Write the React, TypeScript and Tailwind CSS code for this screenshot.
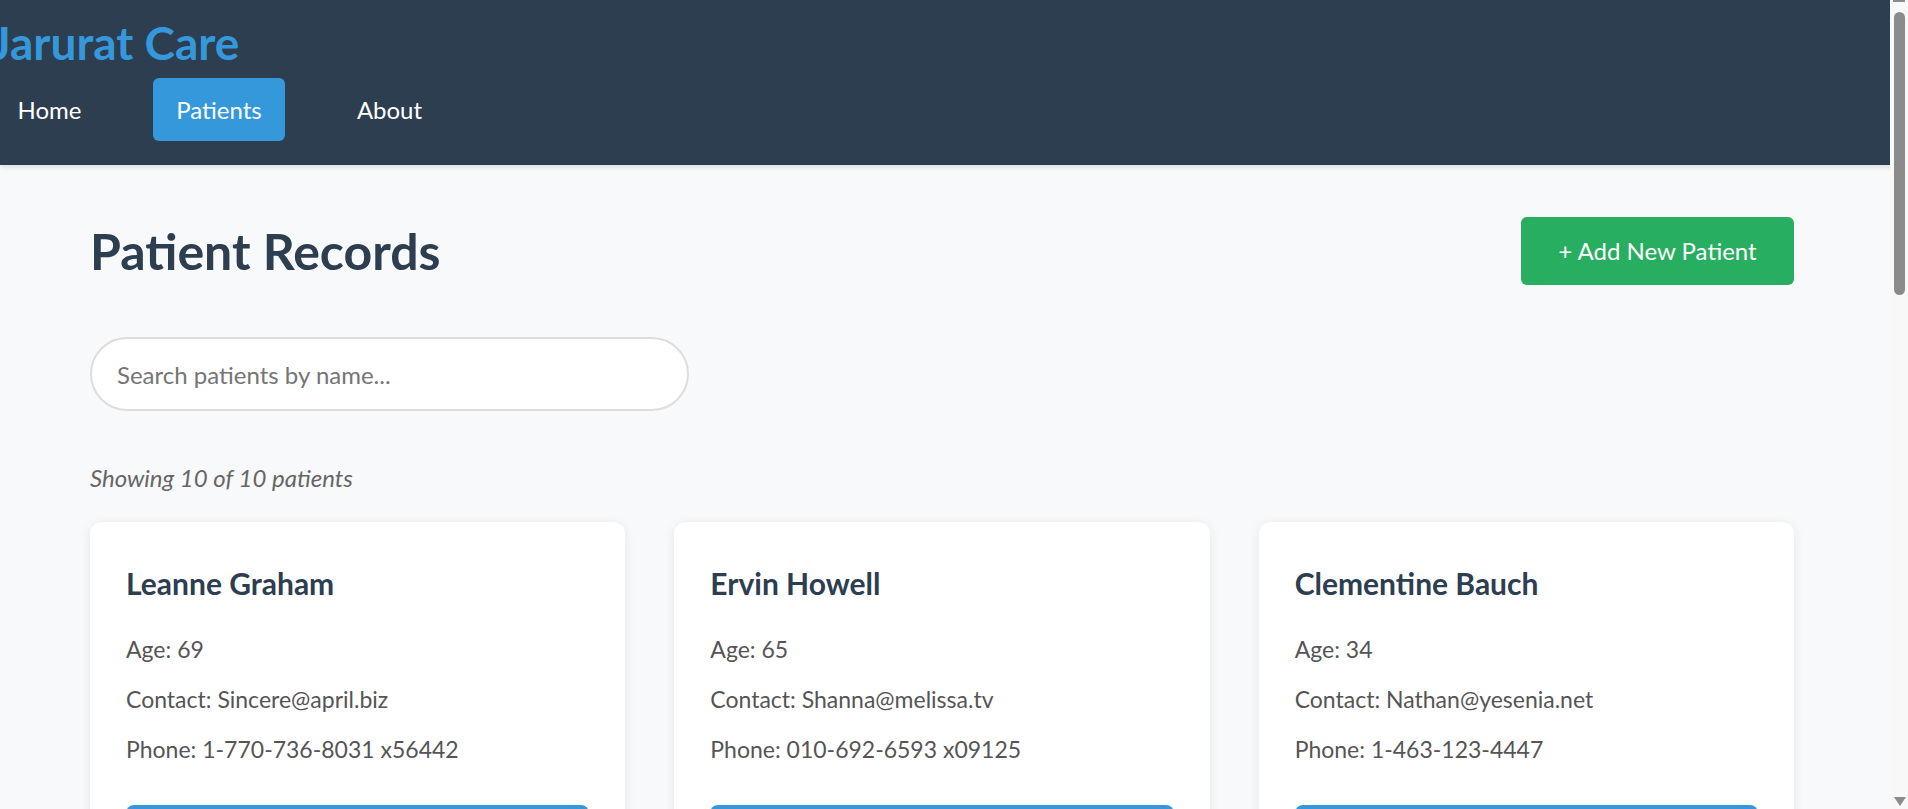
import React from "react";

interface Patient {
  id: number;
  name: string;
  age: number;
  email: string;
  phone: string;
}

const patients: Patient[] = [
  { id: 1, name: "Leanne Graham", age: 69, email: "Sincere@april.biz", phone: "1-770-736-8031 x56442" },
  { id: 2, name: "Ervin Howell", age: 65, email: "Shanna@melissa.tv", phone: "010-692-6593 x09125" },
  { id: 3, name: "Clementine Bauch", age: 34, email: "Nathan@yesenia.net", phone: "1-463-123-4447" },
  { id: 4, name: "Patricia Lebsack", age: 52, email: "Julianne.OConner@kory.org", phone: "493-170-9623 x156" },
  { id: 5, name: "Chelsey Dietrich", age: 41, email: "Lucio_Hettinger@annie.ca", phone: "(254)954-1289" },
  { id: 6, name: "Mrs. Dennis Schulist", age: 58, email: "Karley_Dach@jasper.info", phone: "1-477-935-8478 x6430" },
  { id: 7, name: "Kurtis Weissnat", age: 27, email: "Telly.Hoeger@billy.biz", phone: "210.067.6132" },
  { id: 8, name: "Nicholas Runolfsdottir V", age: 73, email: "Sherwood@rosamond.me", phone: "586.493.6943 x140" },
  { id: 9, name: "Glenna Reichert", age: 46, email: "Chaim_McDermott@dana.io", phone: "(775)976-6794 x41206" },
  { id: 10, name: "Clementina DuBuque", age: 31, email: "Rey.Padberg@karina.biz", phone: "024-648-3804" },
];

// top bar with brand and links
function Header() {
  const links = [
    { label: "Home", w: "w-[113px]", active: false },
    { label: "Patients", w: "w-[132px]", active: true },
    { label: "About", w: "w-[115px]", active: false },
  ];
  return (
    <header className="h-[165px] bg-[#2c3e50] pt-[15px] shadow-[0_2px_6px_rgba(0,0,0,0.12)] relative z-10 overflow-hidden">
      <h1 className="-ml-[9px] text-[46px] leading-[56px] font-bold text-[#3498db] whitespace-nowrap">
        Jarurat Care
      </h1>
      <nav className="mt-[7px] -ml-[7px] flex gap-[47px]">
        {links.map((l) => (
          <a
            key={l.label}
            href="#"
            className={
              l.w +
              " h-[63px] leading-[63px] text-center text-[24px] text-white rounded-[6px] " +
              (l.active ? "bg-[#3498db]" : "")
            }
          >
            {l.label}
          </a>
        ))}
      </nav>
    </header>
  );
}

function PatientCard({ patient }: { patient: Patient }) {
  return (
    <div className="bg-white rounded-[12px] shadow-[0_2px_12px_rgba(0,0,0,0.08)] px-[36px] pt-[42px] pb-[36px]">
      <h3 className="text-[30px] leading-[38px] font-bold text-[#2c3e50]">{patient.name}</h3>
      <div className="mt-[32px] flex flex-col gap-[20px] text-[23px] leading-[30px] text-[#555]">
        <p>Age: {patient.age}</p>
        <p>Contact: {patient.email}</p>
        <p>Phone: {patient.phone}</p>
      </div>
      <button className="mt-[41px] w-full h-[54px] rounded-[8px] bg-[#3498db] text-white text-[24px]">
        View Details
      </button>
    </div>
  );
}

// the browser's scrollbar, drawn since the page shot has none
function FakeScrollbar() {
  return (
    <div className="fixed right-0 top-0 z-50 h-screen w-[18px] bg-[#f8f8f8]">
      <div className="mx-auto h-[2px] w-[12px] bg-[#8b8b8b]" />
      <div className="ml-[4px] mt-[10px] h-[283px] w-[11px] rounded-full bg-[#8b8b8b]" />
      <svg className="absolute bottom-[2px] left-[4px]" width="12" height="10" viewBox="0 0 12 10">
        <polygon points="0,0 12,0 6,9" fill="#8b8b8b" />
      </svg>
    </div>
  );
}

export default function App() {
  return (
    <div className="min-h-screen bg-[#f8f9fa] font-['Lato','Noto_Sans',sans-serif]">
      <Header />

      <main className="ml-[90px] w-[1704px] pt-[52px] pb-[48px]">
        {/* title row */}
        <div className="flex items-center justify-between">
          <h2 className="text-[50px] leading-[62px] font-bold text-[#2c3e50]">Patient Records</h2>
          <button className="w-[273px] h-[68px] rounded-[6px] bg-[#27ae60] text-white text-[24px]">
            + Add New Patient
          </button>
        </div>

        {/* search */}
        <input
          type="text"
          placeholder="Search patients by name..."
          className="mt-[52px] block w-[599px] h-[74px] rounded-full border-2 border-[#ddd] bg-white pl-[25px] text-[24px] text-[#333] placeholder:text-[#757575] outline-none"
        />

        <p className="mt-[52px] text-[24px] leading-[30px] italic text-[#666]">
          Showing {patients.length} of {patients.length} patients
        </p>

        <div className="mt-[29px] grid grid-cols-3 gap-[49px]">
          {patients.map((p) => (
            <PatientCard key={p.id} patient={p} />
          ))}
        </div>
      </main>

      <FakeScrollbar />
    </div>
  );
}
